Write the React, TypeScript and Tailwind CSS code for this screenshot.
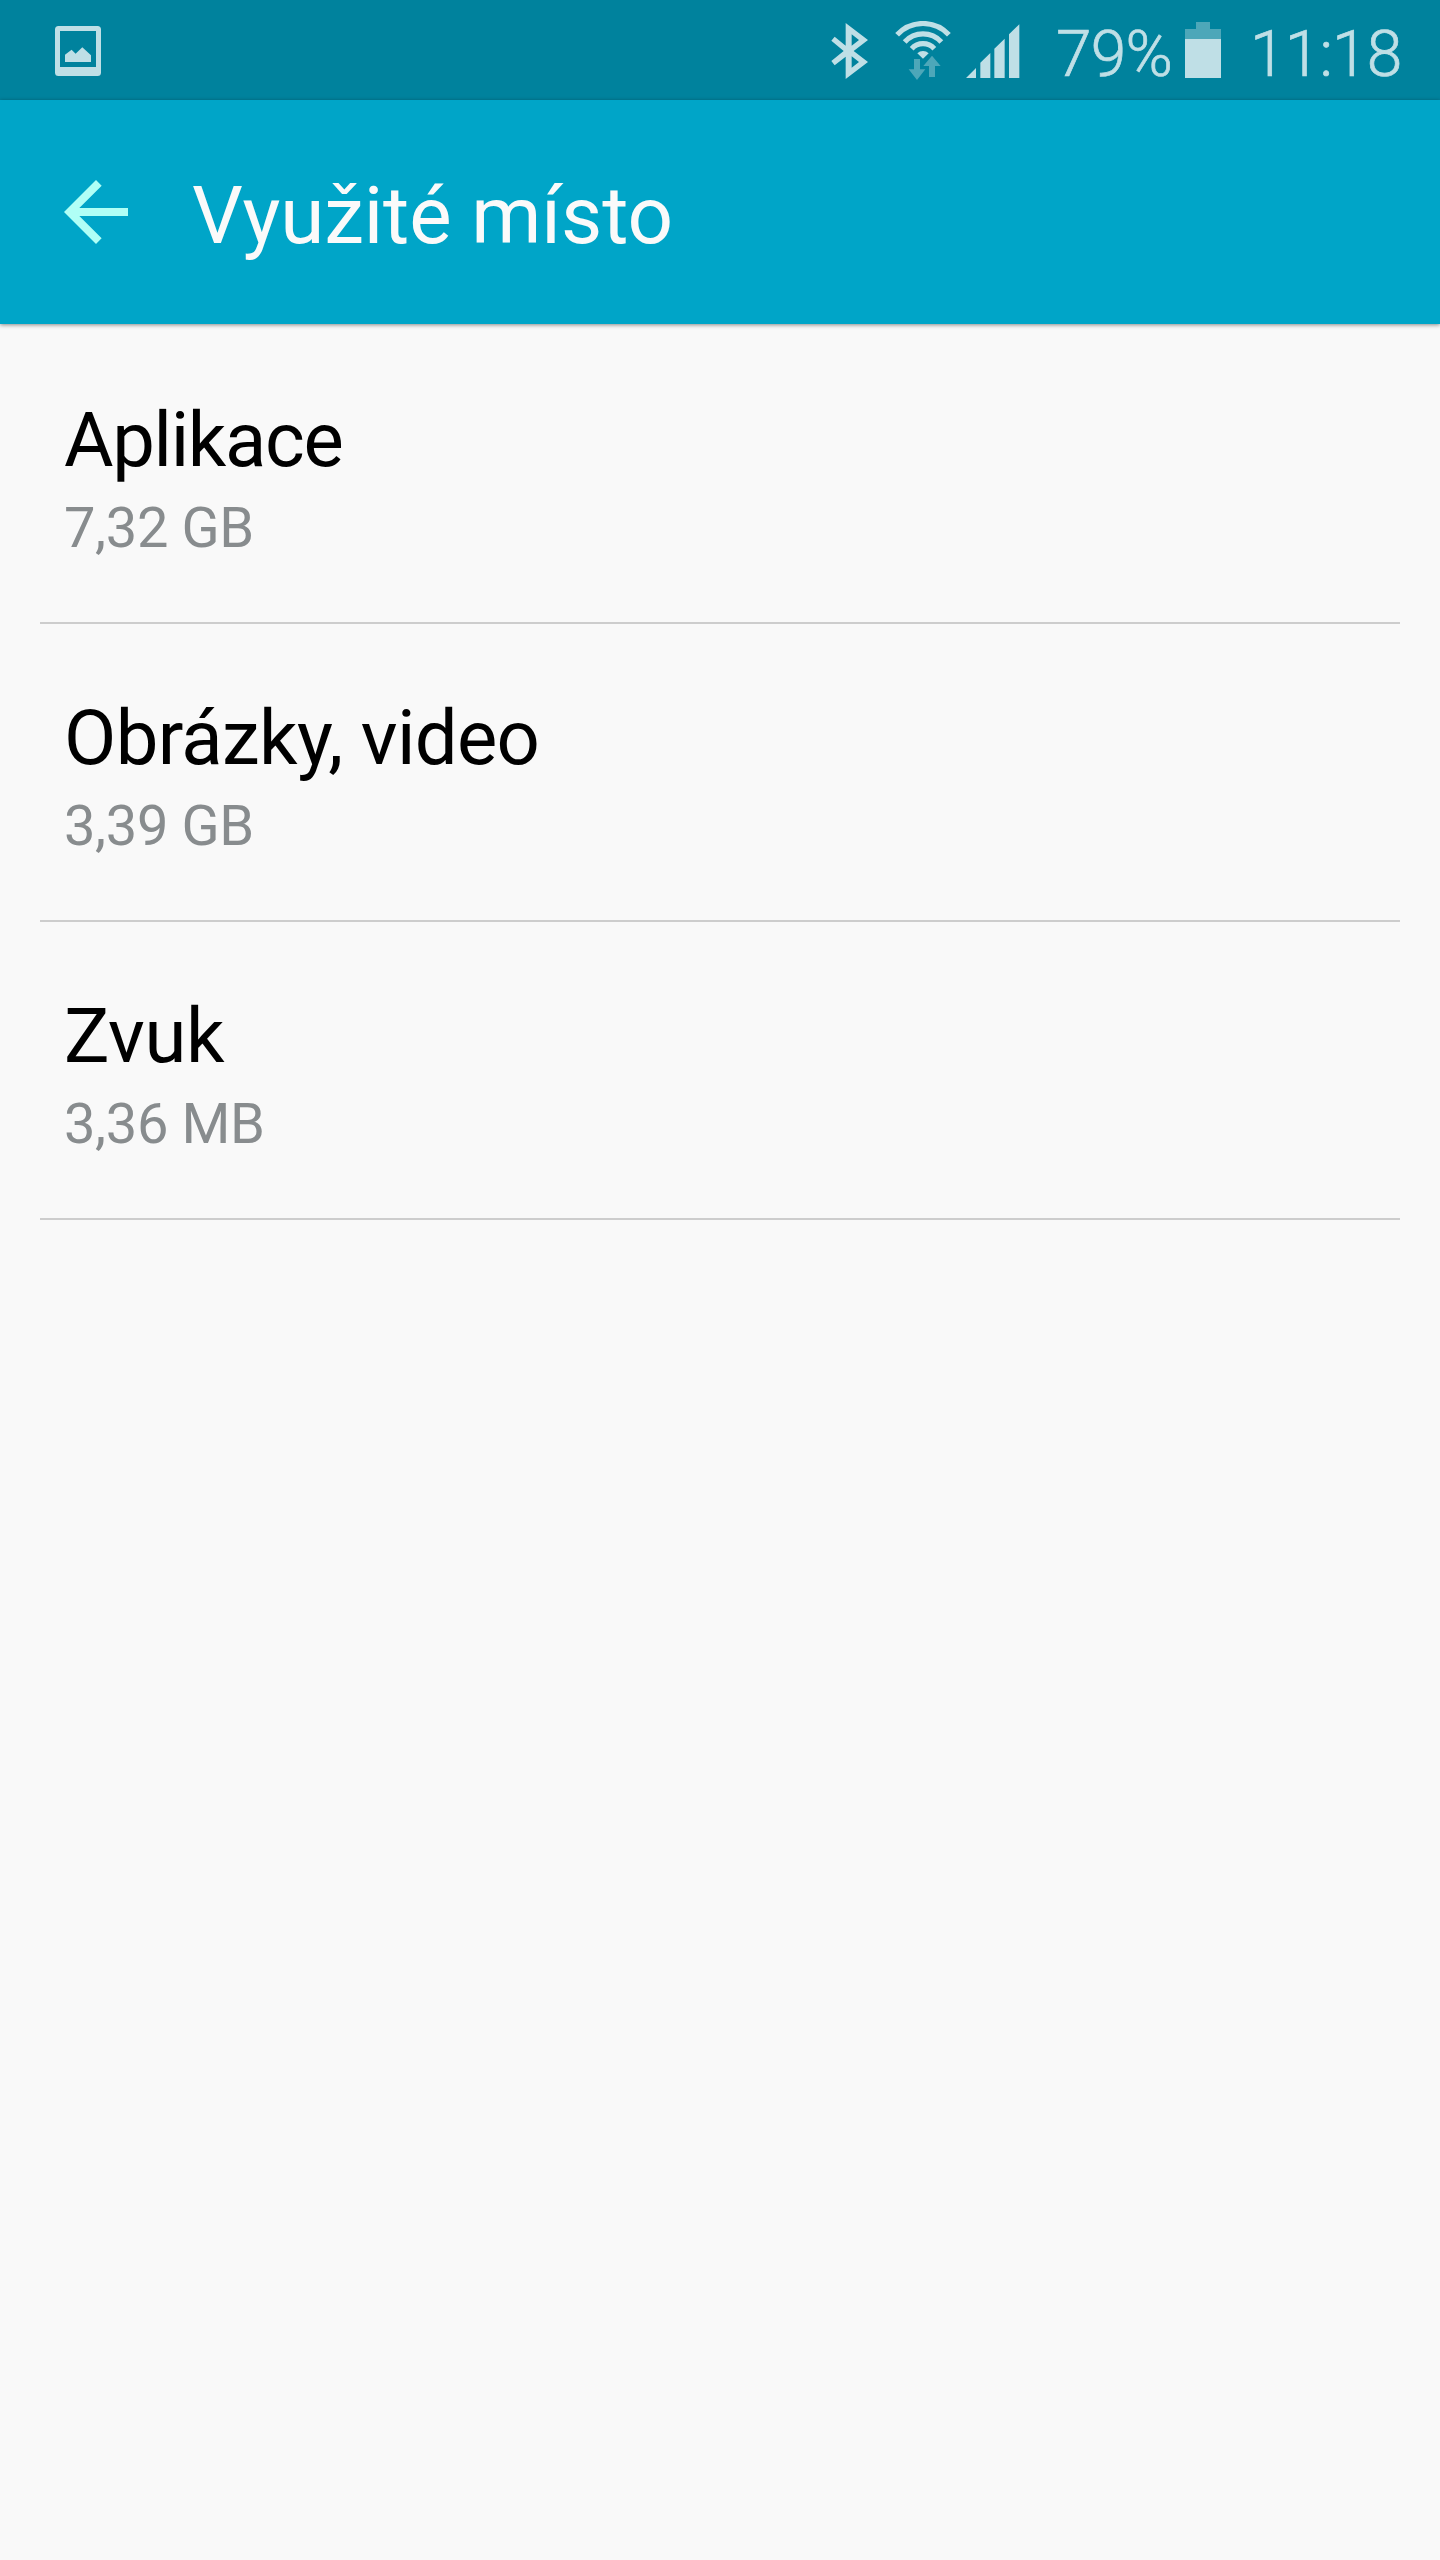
const STORAGE_ITEMS = [
  { name: 'Aplikace', size: '7,32 GB', tracking: 'tracking-[-1.350px]' },
  { name: 'Obrázky, video', size: '3,39 GB', tracking: 'tracking-[-0.650px]' },
  { name: 'Zvuk', size: '3,36 MB', tracking: 'tracking-[-0.450px]' },
];

function PictureIcon() {
  return (
    <svg viewBox="0 0 46 50" className="h-[50px] w-[46px]" fill="currentColor">
      <path
        fillRule="evenodd"
        d="M3.5 0h39A3.5 3.5 0 0 1 46 3.5v43a3.5 3.5 0 0 1-3.5 3.5h-39A3.5 3.5 0 0 1 0 46.500v-43A3.5 3.5 0 0 1 3.5 0zM5 5v36h36V5z"
      />
      <path d="M10 36v-7.300l6.600-5 4 4 6.700-6.500 8.700 8V36z" />
    </svg>
  );
}

function BluetoothIcon() {
  return (
    <svg viewBox="64 39 111 168" className="h-[56px] w-[37px]" fill="currentColor">
      <path
        fillRule="evenodd"
        d="M108 39L175 90L132 123L175 156L108 207V140L75 166L65 153L102 123L65 92L75 80L108 107ZM126 73V107L148 90ZM126 139V173L148 156Z"
      />
    </svg>
  );
}

function WifiIcon() {
  return (
    <svg viewBox="256 33 168 180" className="h-[60px] w-[56px]">
      <g fill="none" stroke="currentColor" strokeWidth="15.500">
        <path d="M262.300 74.600A105.500 105.500 0 0 1 417.700 74.600" />
        <path d="M285 96A74.500 74.500 0 0 1 395 96" />
        <path d="M306 116A46 46 0 0 1 374 116" />
      </g>
      <path fill="currentColor" d="M340 146L323 130A24 24 0 0 1 357 130Z" />
      <path
        fill="#4da7b9"
        d="M313 147H331V178H347L322 210L297 178H313ZM367 137L393 168H376V201H358V168H341Z"
      />
    </svg>
  );
}

function SignalIcon() {
  return (
    <svg viewBox="470 42 162 162" className="h-[54px] w-[54px]" fill="currentColor">
      <path d="M470 204L500 174V204ZM513 204V158L543 129V204ZM555 204V116L586 86V204ZM599 204V73L630 43V204Z" />
    </svg>
  );
}

function BatteryIcon() {
  return (
    <svg viewBox="0 0 36 56" className="h-[56px] w-[36px]">
      <path fill="#4da7b9" d="M11 0h14v7h11v10H0V7h11z" />
      <path fill="currentColor" d="M0 17h36v39H0z" />
    </svg>
  );
}

function StatusBar() {
  return (
    <div className="flex h-[100px] items-start bg-[#00829d] pr-[34px] pl-[55px] text-[#bfdfe6]">
      <div className="mt-[26px]">
        <PictureIcon />
      </div>
      <div className="ml-auto flex items-start">
        <div className="mt-[23px] mr-[27px]">
          <BluetoothIcon />
        </div>
        <div className="mt-[21px] mr-[15px]">
          <WifiIcon />
        </div>
        <div className="mt-[24px] mr-[36px]">
          <SignalIcon />
        </div>
        <span className="mt-[14px] w-[129px] text-[64px] leading-[82px] font-light tracking-[-0.8px] whitespace-nowrap [-webkit-text-stroke:0.7px]">
          79%
        </span>
        <div className="mt-[22px]">
          <BatteryIcon />
        </div>
        <span className="mt-[14px] ml-[29px] w-[156px] text-[64px] leading-[82px] font-light tracking-[-0.8px] whitespace-nowrap [-webkit-text-stroke:0.7px]">
          11:18
        </span>
      </div>
    </div>
  );
}

export default function App() {
  return (
    <div className="min-h-screen w-full bg-[#f9f9f9] font-['Roboto',sans-serif]">
      <StatusBar />
      <header className="flex h-[224px] items-center bg-[#00a5c8] px-16 shadow-[0_1px_4px_rgba(0,0,0,0.45)]">
        <button type="button" aria-label="Zpět" className="text-[#b0fff6]">
          <svg viewBox="4 4 16 16" className="h-16 w-16" fill="currentColor">
            <path d="M20 11H7.830l5.590-5.590L12 4l-8 8 8 8 1.410-1.410L7.830 13H20v-2z" />
          </svg>
        </button>
        <h1 className="ml-16 pt-2 text-[80px] leading-[96px] font-normal tracking-[-0.1px] text-[#fafafa]">
          Využité místo
        </h1>
      </header>
      <ul className="mx-10 mt-0.5">
        {STORAGE_ITEMS.map((item) => (
          <li
            key={item.name}
            className="border-b-2 border-[#cdcdcd] px-6 pt-[70px] pb-[50px]"
          >
            <p className={`text-[76px] leading-[88px] text-black ${item.tracking}`}>
              {item.name}
            </p>
            <p className="text-[56px] leading-[88px] tracking-[-0.350px] text-[#888c8e]">
              {item.size}
            </p>
          </li>
        ))}
      </ul>
    </div>
  );
}
